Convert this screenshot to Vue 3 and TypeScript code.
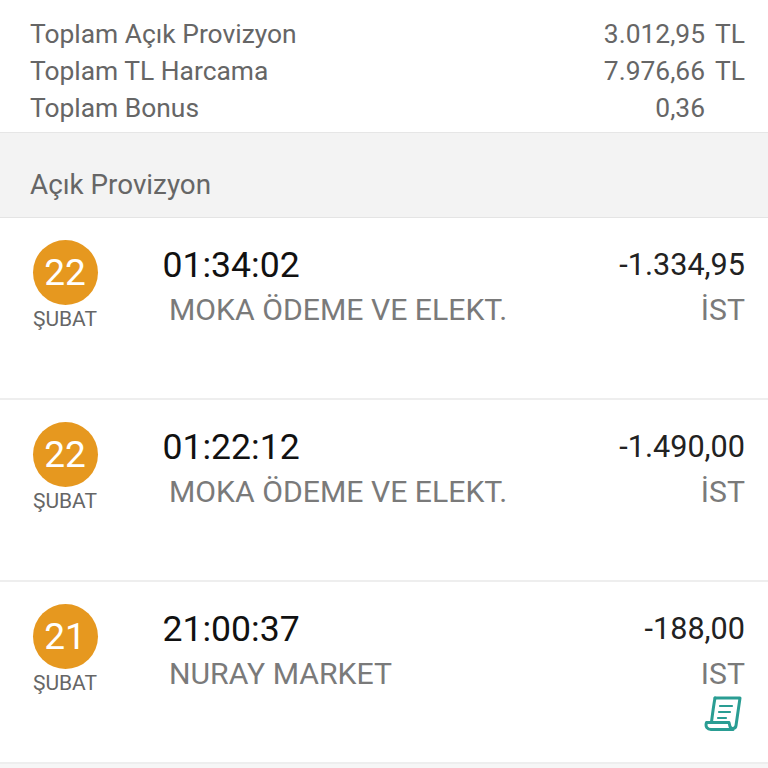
<script setup lang="ts">
interface Transaction {
  id: number;
  day: string;
  time: string;
  merchant: string;
  amount: string;
  city: string;
  hasReceipt?: boolean;
}

const totals = [
  { label: "Toplam Açık Provizyon", value: "3.012,95", unit: "TL" },
  { label: "Toplam TL Harcama", value: "7.976,66", unit: "TL" },
  { label: "Toplam Bonus", value: "0,36", unit: "" }
];

const transactions: Transaction[] = [
  { id: 1, day: "22", time: "01:34:02", merchant: "MOKA ÖDEME VE ELEKT.", amount: "-1.334,95", city: "İST" },
  { id: 2, day: "22", time: "01:22:12", merchant: "MOKA ÖDEME VE ELEKT.", amount: "-1.490,00", city: "İST" },
  { id: 3, day: "21", time: "21:00:37", merchant: "NURAY MARKET", amount: "-188,00", city: "IST", hasReceipt: true }
];
</script>

<template>
  <div class="page">
    <section class="totals">
      <div v-for="item in totals" :key="item.label" class="total-row">
        <span class="total-label">{{ item.label }}</span>
        <span class="total-value">{{ item.value }}</span>
        <span class="total-unit">{{ item.unit }}</span>
      </div>
    </section>

    <header class="section-title">Açık Provizyon</header>

    <article v-for="tx in transactions" :key="tx.id" class="tx">
      <div class="date">
        <div class="day">{{ tx.day }}</div>
        <div class="month">ŞUBAT</div>
      </div>
      <div class="info">
        <div class="time">{{ tx.time }}</div>
        <div class="merchant">{{ tx.merchant }}</div>
      </div>
      <div class="side">
        <div class="amount">{{ tx.amount }}</div>
        <div class="city">{{ tx.city }}</div>
        <svg v-if="tx.hasReceipt" class="receipt" viewBox="0 0 38 36" fill="none" stroke="#2a9d93" stroke-width="3" stroke-linecap="round" stroke-linejoin="round">
          <path d="M11 2H36L32 29.5C31.6 33 27 33.5 26 30.5L25 26.5H2.5C1 31 3.5 33.5 7 33.5H29" />
          <path d="M11 2C9.5 10 8.5 18 7.5 26" />
          <path d="M16 10H28M15 16H26M14 22H22" stroke-width="2.2" />
        </svg>
      </div>
    </article>
  </div>
</template>

<style>
html,
body {
  background: #fff;
}
</style>

<style scoped>
.page {
  width: 768px;
  height: 768px;
  overflow: hidden;
  background: #f6f6f6;
  font-family: Roboto, "Liberation Sans", sans-serif;
}

.totals {
  height: 133px;
  box-sizing: border-box;
  padding: 16px 23px 0 30px;
  background: #fff;
  border-bottom: 1px solid #e6e6e6;
}

.total-row {
  display: flex;
  height: 37px;
  line-height: 37px;
  font-size: 26.4px;
  color: #666;
}

.total-label {
  flex: 1;
}

.total-value {
  text-align: right;
}

.total-unit {
  width: 40px;
  text-align: right;
}

.section-title {
  height: 85px;
  box-sizing: border-box;
  padding: 35px 30px 0;
  line-height: 34px;
  font-size: 27.8px;
  color: #666;
  background: #f3f3f3;
  border-bottom: 1px solid #e4e4e4;
}

.tx {
  display: flex;
  height: 182px;
  box-sizing: border-box;
  padding: 22px 23px 0 32px;
  background: #fff;
  border-bottom: 2px solid #eeeeee;
}

.date {
  width: 66px;
  display: flex;
  flex-direction: column;
  align-items: center;
}

.day {
  width: 65px;
  height: 65px;
  border-radius: 50%;
  background: #e6981f;
  color: #fff;
  font-size: 37px;
  line-height: 65px;
  text-align: center;
}

.month {
  margin-top: 1px;
  font-size: 21px;
  line-height: 26px;
  color: #666;
}

.info {
  flex: 1;
  margin-left: 64.5px;
}

.time {
  font-size: 35.6px;
  line-height: 50px;
  color: #111;
}

.merchant {
  margin-left: 6.5px;
  font-size: 30.2px;
  line-height: 40px;
  color: #7a7a7a;
}

.side {
  display: flex;
  flex-direction: column;
  align-items: flex-end;
}

.amount {
  font-size: 30.6px;
  line-height: 50px;
  color: #222;
}

.city {
  font-size: 30.2px;
  line-height: 40px;
  color: #7a7a7a;
}

.receipt {
  width: 38px;
  height: 36px;
  margin-top: 2px;
  margin-right: 3px;
}
</style>
